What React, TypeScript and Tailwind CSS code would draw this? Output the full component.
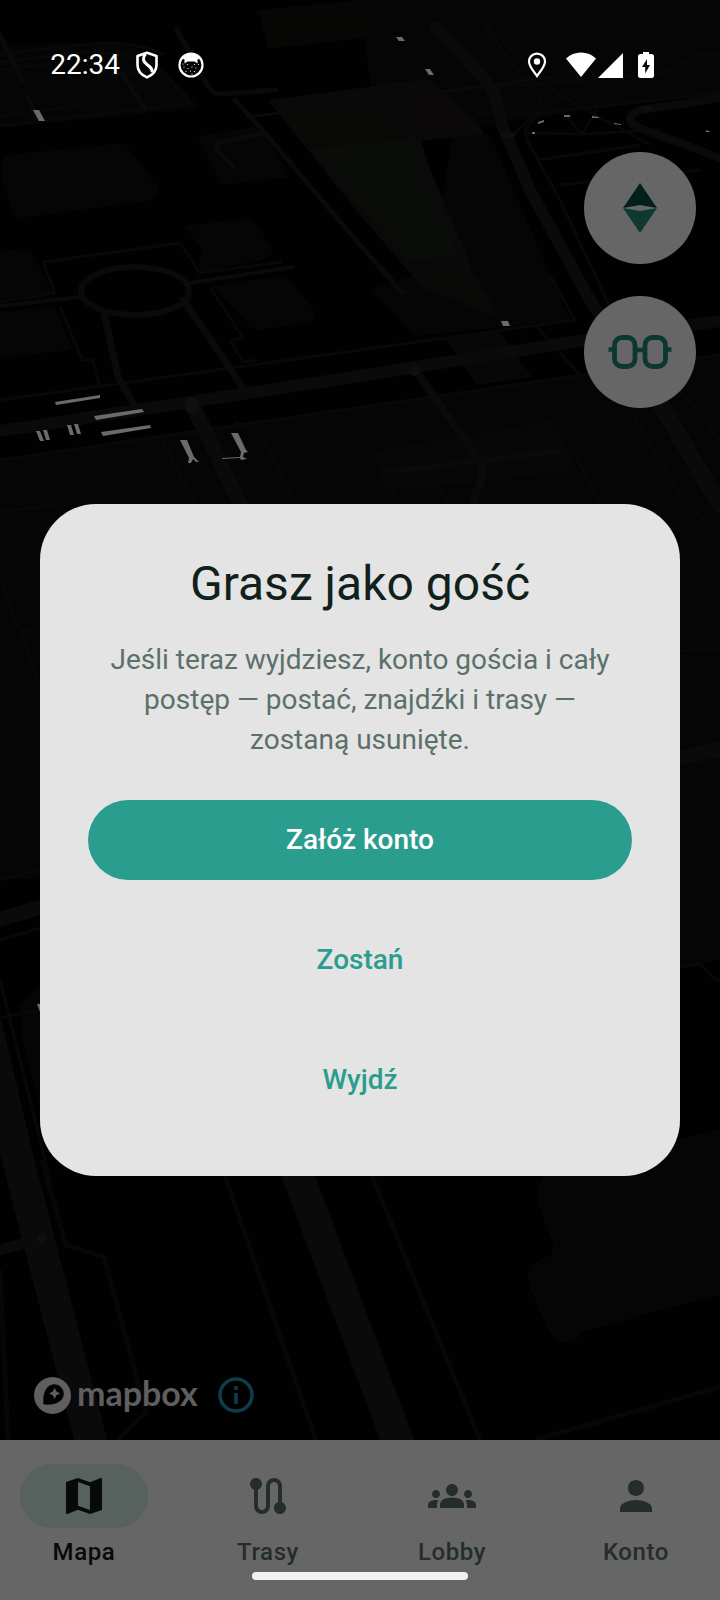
import type { ReactNode } from "react";
import { MdGroups, MdMap, MdPerson, MdRoute } from "react-icons/md";
import { SiMapbox } from "react-icons/si";

function MapBackdrop() {
  return (
    <svg
      className="absolute inset-0 h-full w-full"
      viewBox="0 0 720 1600"
      preserveAspectRatio="xMidYMid slice"
      aria-hidden="true"
    >
      <rect width="720" height="1600" fill="#010101" />

      {/* land areas */}
      <g fill="#050505">
        <path d="M0 45L120 42L150 55L200 108L0 128Z" />
        <path d="M0 460L245 424L720 353V860L0 880Z" />
        <path d="M5 155L125 143L158 188Q160 198 148 201L22 218Q12 218 10 205L0 175Z" />
        <path d="M184 226L242 219Q252 218 258 227L272 248Q274 256 264 259L208 271Q200 272 198 265L203 250Z" />
        <path d="M212 286L285 275L313 308Q318 318 306 323L260 330Q250 330 246 322Z" />
        <path d="M0 249L32 251L52 293L0 300Z" />
        <path d="M0 312L55 306L72 350L0 358Z" />
        <path d="M197 136L262 126L290 177L222 185Z" />
        <path d="M360 0H720V92L480 126L370 85Z" />
        <path d="M455 120L490 135L570 320L415 336L370 290L430 270Z" />
        <path d="M20 1005L40 985L60 1180L22 1040Z" />
        <path d="M680 845L720 832V960L680 968Z" />
        <path d="M545 1176Q535 1190 541 1210L553 1238Q557 1250 549 1258Q535 1262 531 1268Q527 1276 532 1290L551 1332Q556 1343 566 1341L577 1338V1332L720 1293V1130Z" stroke="#0a0a0a" strokeWidth="1" />
      </g>
      <path d="M258 10L360 0L390 35L268 49Z" fill="#060604" />
      <path d="M268 100L375 86L400 110L415 135L460 250L500 318L423 288L360 215Z" fill="#090908" />
      <path d="M310 150L360 143L420 138L458 255L410 261L360 207Z" fill="#0a0c09" />
      <path d="M375 83L430 80L475 120L485 134L420 141L390 108Z" fill="#0a0808" />
      <path d="M445 338L498 330L532 377L477 385Z" fill="#070707" />
      <path d="M373 451L555 420L578 470L390 492Z" fill="#070707" />

      {/* minor paths */}
      <g fill="none" stroke="#080808" strokeWidth="3">
        <path d="M0 54L90 44Q135 40 165 55M0 62L85 52Q125 52 160 66" />
        <path d="M0 70L48 64L83 105L0 116M0 126L190 103L160 68L122 74L145 109" />
        <path d="M43 262L180 243L200 273L282 262M43 262L55 293L0 302" />
        <path d="M60 306L82 360L93 360L100 388M210 287L243 338L230 341L243 362L258 360" />
        <path d="M0 400L360 350L575 320L550 275" />
        <path d="M0 460L245 424L720 355" />
        <path d="M160 435L195 504M235 422L262 435L295 504" />
        <path d="M480 20L540 100L542 112L525 130L527 140L560 200L616 320" />
        <path d="M475 113L540 113L720 93M480 20L560 95L650 145M505 140L540 112" />
        <path d="M525 133L582 134L660 130M560 185L700 170M720 54L700 55Q680 68 650 75L480 88" />
        <path d="M565 115L582 134L597 110M538 160L640 145" />
        <path d="M630 410L685 504L720 530M680 390L720 440" />
        <path d="M380 472L400 504M425 470L450 504M495 470L535 504M573 450L600 504" />
        <path d="M535 325L580 375" />
        <path d="M0 512L60 504M0 580L40 685M20 632L40 628M0 880L40 870M0 940L40 928" />
        <path d="M680 651L720 648M680 967L700 964L715 980H720" />
        <path d="M0 1018L40 1010M0 980L50 1180" />
      </g>
      <g fill="none" stroke="#070707" strokeWidth="5">
        <path d="M42 1160L66 1245L104 1257L146 1412L118 1440" />
        <path d="M225 1176L316 1440M372 1176L480 1440" />
        <path d="M535 1440L720 1387" />
        <path d="M0 1270L8 1440" />
      </g>

      {/* streets */}
      <g fill="none" stroke="#0a0a0b" strokeLinejoin="round" strokeLinecap="round">
        <g strokeWidth="5">
          <path d="M177 30L208 86Q213 95 222 94L276 90" />
          <path d="M235 100L265 133L360 245L402 292" />
          <path d="M265 133L222 142Q214 143 216 149L233 166" />
          <path d="M0 35L22 80M28 97L38 120M122 74L145 109" />
          <path d="M388 101L413 135L468 265L422 271" />
          <path d="M388 472L560 451" />
        </g>
        <path d="M248 117L360 103L550 77" strokeWidth="3" />
        <ellipse cx="135" cy="291" rx="54" ry="24" strokeWidth="6" />
        <path d="M190 283L293 267M0 306L80 297" strokeWidth="4" />
        <path d="M104 312L118 377L136 408M183 300L225 360L246 394" strokeWidth="7" />
        <path d="M0 431L190 402L360 376L585 340L720 321" strokeWidth="12" />
        <path d="M192 404L248 520" strokeWidth="15" />
        <path d="M436 28L484 78Q499 97 502 125L530 190L590 300L650 395" strokeWidth="12" />
        <path d="M655 395L720 505" strokeWidth="17" />
        <path d="M720 98L642 110Q618 118 640 128L720 158" strokeWidth="8" />
        <path d="M415 370L478 458Q484 466 482 477L470 510" strokeWidth="8" />
        <path d="M0 919L45 906M675 759L720 749" strokeWidth="15" />
        <path d="M0 1250L42 1238" strokeWidth="11" />
      </g>
      <g fill="none" stroke="#0a0a0a" strokeWidth="32">
        <path d="M-15 1020L18 1160L92 1445M294 1165L399 1445" />
      </g>
      <g fill="#0e0f12">
        <circle cx="192" cy="405" r="8" />
        <circle cx="415" cy="371" r="5" />
        <ellipse cx="508" cy="135" rx="8" ry="3" />
        <ellipse cx="648" cy="108" rx="7" ry="3" />
        <circle cx="42" cy="1239" r="5" />
      </g>

      {/* crossings and stairs */}
      <g fill="#6b6b6b">
        <path d="M33 110H39L45 121H39Z" />
        <path d="M396 37H402L405 41H399ZM425 69H430L434 75H429Z" />
        <path d="M532 132H535V134H532ZM538 122L544 120V122L538 124ZM564 115H570V117H564ZM592 116L599 117V118H592ZM614 123L621 124V125L614 124ZM706 130L711 132H706Z" />
        <path d="M501 321H508L510 326H503Z" />
        <path d="M55 402L100 395V398L56 405ZM94 416L142 409L144 412L96 420ZM101 432L150 425L151 428L103 436Z" />
        <path d="M36 431H40L44 441H40ZM43 430H47L50 440H46ZM67 425H71L74 435H70ZM74 424H78L81 434H77Z" />
        <path d="M180 440H187L194 457L199 462H196L193 459L191 463H188L189 458ZM231 433H238L246 450L248 452L244 453L243 457L247 459L241 460L240 458L222 459V458L240 457L241 452Z" />
        <path d="M37 1004H40V1012Z" />
      </g>
    </svg>
  );
}

function StatusBar() {
  return (
    <header className="relative z-20 flex h-32 items-center justify-between pt-[2px] pr-16 pl-12 text-white">
      <div className="flex items-center">
        <span className="w-[72px] text-right text-[28px] leading-8">22:34</span>
        <svg className="ml-[15px] h-7 w-6" viewBox="0 0 24 28" fill="none" stroke="currentColor" aria-hidden="true">
          <path d="M12 1.800L21.500 5V14C21.500 20 17.500 24 12 26.400C6.500 24 2.500 20 2.500 14V5Z" strokeWidth="2.600" strokeLinejoin="round" />
          <path d="M10.500 3C7 7 8 10.500 12 13.500C16 16.500 18 18.500 17 21.500" strokeWidth="3" />
        </svg>
        <svg className="ml-[19px] h-[26px] w-[26px]" viewBox="0 0 26 26" aria-hidden="true">
          <circle cx="13" cy="13" r="11.500" fill="#050505" stroke="currentColor" strokeWidth="2.200" />
          <path d="M4 6.500Q7 1.500 13 1.500T22 6.500L19.500 7.500V11.500L16.500 9.500H9.500L6.500 11.500V7.500Z" fill="currentColor" />
          <g fill="currentColor">
            <circle cx="9.500" cy="12.500" r=".6" /><circle cx="16.500" cy="12.500" r=".6" />
            <circle cx="6" cy="15" r=".6" /><circle cx="10" cy="16.500" r=".6" />
            <circle cx="14" cy="15" r=".6" /><circle cx="18" cy="16" r=".6" />
            <circle cx="8" cy="19.500" r=".6" /><circle cx="12.500" cy="19" r=".6" />
            <circle cx="16.500" cy="19.500" r=".6" /><circle cx="14" cy="22" r=".6" />
            <circle cx="20.500" cy="12.500" r=".6" /><circle cx="5" cy="12" r=".6" />
          </g>
        </svg>
      </div>
      <div className="flex items-center">
        <svg className="h-[26px] w-5" viewBox="0 0 20 26" aria-hidden="true">
          <path d="M10 1.600C5.500 1.600 2 5 2 9.500C2 14.500 6.500 19 10 24C13.500 19 18 14.500 18 9.500C18 5 14.500 1.600 10 1.600Z" fill="none" stroke="currentColor" strokeWidth="2.200" />
          <circle cx="10" cy="9.500" r="3.200" fill="currentColor" />
        </svg>
        <svg className="ml-[18px] h-[26px] w-[32px]" viewBox="0 0 32 26" fill="currentColor" aria-hidden="true">
          <path d="M16 25L1 6.500Q7 .5 16 .5T31 6.500Z" />
        </svg>
        <svg className="ml-px h-[26px] w-[26px]" viewBox="0 0 26 26" fill="currentColor" aria-hidden="true">
          <path d="M25 1V26H0Z" />
        </svg>
        <svg className="mr-[2px] ml-[14px] h-[26px] w-4" viewBox="0 0 16 26" aria-hidden="true">
          <path d="M5 0H11V2H13.500Q16 2 16 4.500V23.500Q16 26 13.500 26H2.500Q0 26 0 23.500V4.500Q0 2 2.500 2H5Z" fill="currentColor" />
          <path d="M9 7L4 15H7.200V21.500L12 13H9Z" fill="#0a0a0a" />
        </svg>
      </div>
    </header>
  );
}

function MapButton({ label, children }: { label: string; children: ReactNode }) {
  return (
    <button
      type="button"
      aria-label={label}
      className="flex h-28 w-28 items-center justify-center rounded-full bg-[#666666]"
    >
      {children}
    </button>
  );
}

const tabs = [
  { label: "Mapa", Icon: MdMap, active: true },
  { label: "Trasy", Icon: MdRoute, active: false },
  { label: "Lobby", Icon: MdGroups, active: false },
  { label: "Konto", Icon: MdPerson, active: false },
];

function BottomNav() {
  return (
    <nav className="relative grid grid-cols-4 gap-4 bg-[#666666] pt-6 pb-8">
      {tabs.map(({ label, Icon, active }) => (
        <a
          key={label}
          href="#"
          aria-current={active ? "page" : undefined}
          className={
            active
              ? "flex flex-col items-center gap-2 text-[#060b09]"
              : "flex flex-col items-center gap-2 text-[#242d2a]"
          }
        >
          <span
            className={
              active
                ? "flex h-16 w-32 items-center justify-center rounded-full bg-[#57625f]"
                : "flex h-16 w-32 items-center justify-center rounded-full"
            }
          >
            <Icon className="h-12 w-12" aria-hidden="true" />
          </span>
          <span className="text-[24px] leading-8 font-medium tracking-wide">{label}</span>
        </a>
      ))}
    </nav>
  );
}

function GuestDialog() {
  return (
    <div className="absolute inset-0 z-10 flex items-center justify-center px-10 pt-20">
      <section
        role="dialog"
        aria-modal="true"
        aria-labelledby="guest-title"
        className="flex w-full max-w-[1120px] flex-col rounded-[56px] bg-[#e4e4e4] px-12 pt-12 pb-14 text-center"
      >
        <h1 id="guest-title" className="text-[48px] leading-[64px] text-[#10211c]">
          Grasz jako gość
        </h1>
        <p className="mt-6 px-3 text-[28px] leading-10 text-[#5b7069]">
          Jeśli teraz wyjdziesz, konto gościa i cały postęp — postać, znajdźki i trasy — zostaną usunięte.
        </p>
        <div className="mt-10 flex flex-col gap-10 text-[28px] leading-10 font-medium">
          <button type="button" className="h-20 rounded-full bg-[#2b9d8e] text-white">
            Załóż konto
          </button>
          <button type="button" className="h-20 rounded-full text-[#2b9d8e]">
            Zostań
          </button>
          <button type="button" className="h-20 rounded-full text-[#2b9d8e]">
            Wyjdź
          </button>
        </div>
      </section>
    </div>
  );
}

export default function App() {
  return (
    <div className="relative flex min-h-screen flex-col overflow-hidden bg-black font-[Roboto,sans-serif]">
      <MapBackdrop />
      <StatusBar />
      <main className="relative flex flex-1 flex-col justify-between">
        <div className="flex flex-col items-end gap-8 pt-6 pr-6">
          <MapButton label="Kompas">
            <svg className="h-[52px] w-9" viewBox="0 0 36 52" aria-hidden="true">
              <path d="M18 1L35 26L18 23L1 26Z" fill="#031f1a" />
              <path d="M18 51L1 26L18 29L35 26Z" fill="#0f3a33" />
            </svg>
          </MapButton>
          <MapButton label="Widok">
            <svg className="h-9 w-16" viewBox="0 0 64 36" fill="none" stroke="#0d3831" strokeWidth="4.800" aria-hidden="true">
              <rect x="6.500" y="3.500" width="20.500" height="29" rx="7.500" />
              <rect x="37" y="3.500" width="20.500" height="29" rx="7.500" />
              <path d="M27 16H37M.5 15.500H6M58 15.500H63.500" strokeWidth="4.500" />
            </svg>
          </MapButton>
        </div>
        <div className="flex items-center gap-5 pb-6 pl-[34px]">
          <a href="#" aria-label="Mapbox" className="flex items-center gap-1.5 text-[#5f5f5f]">
            <SiMapbox className="h-[37px] w-[37px]" aria-hidden="true" />
            <span className="pb-1 font-[Lato,sans-serif] text-[34px] leading-[38px] font-bold">mapbox</span>
          </a>
          <button type="button" aria-label="Informacje" className="text-[#0d3c4b]">
            <svg className="h-9 w-9" viewBox="0 0 36 36" fill="none" stroke="currentColor" aria-hidden="true">
              <circle cx="18" cy="18" r="16" strokeWidth="3.500" />
              <path d="M18 16V27M18 9V13" strokeWidth="3.600" />
            </svg>
          </button>
        </div>
      </main>
      <BottomNav />
      <GuestDialog />
      <div className="absolute bottom-5 left-1/2 z-20 h-2 w-[30%] -translate-x-1/2 rounded-full bg-[#f2f2f2]" />
    </div>
  );
}
